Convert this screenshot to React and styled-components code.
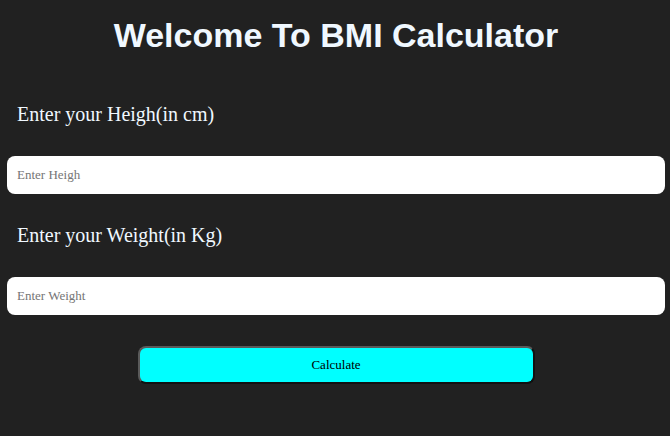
import React from 'react';
import styled, { createGlobalStyle } from 'styled-components';

const GlobalStyle = createGlobalStyle`
  html, body {
    margin: 0;
    padding: 0;
    background: #212121;
  }
`;

const Page = styled.div`
  min-height: 436px;
  padding: 0 5px 0 7px;
  box-sizing: border-box;
  background: #212121;
  font-family: "Liberation Serif", serif;
`;

const Title = styled.h1`
  margin: 0;
  padding-top: 16px;
  height: 39px;
  line-height: 39px;
  text-align: center;
  font-family: "Liberation Sans", Arial, sans-serif;
  font-size: 34px;
  font-weight: bold;
  color: #f0f8ff;
`;

const Form = styled.form`
  display: flex;
  flex-direction: column;
  padding-top: 48px;
`;

const Label = styled.label`
  display: block;
  margin: 0 0 30px 10px;
  font-size: 20px;
  line-height: 23px;
  color: #f0f8ff;
`;

const Input = styled.input`
  height: 38px;
  box-sizing: border-box;
  margin-bottom: ${(p) => p.$gap}px;
  padding: 0 10px;
  border: none;
  border-radius: 8px;
  background: #fff;
  font-family: "Liberation Serif", serif;
  font-size: 13px;
  outline: none;
  &::placeholder {
    color: #757575;
  }
`;

const Button = styled.button`
  align-self: center;
  width: 397px;
  height: 38px;
  box-sizing: border-box;
  border: 2px solid;
  border-color: #5a5a5a #111 #111 #5a5a5a;
  border-radius: 8px;
  background: #00ffff;
  color: #000;
  font-family: "Liberation Serif", serif;
  font-size: 13px;
  cursor: pointer;
`;

export default function App() {
  return (
    <Page>
      <GlobalStyle />
      <Title>Welcome To BMI Calculator</Title>
      <Form onSubmit={(e) => e.preventDefault()}>
        <Label htmlFor="height">Enter your Heigh(in cm)</Label>
        <Input id="height" type="text" placeholder="Enter Heigh" $gap={30} />
        <Label htmlFor="weight">Enter your Weight(in Kg)</Label>
        <Input id="weight" type="text" placeholder="Enter Weight" $gap={31} />
        <Button type="submit">Calculate</Button>
      </Form>
    </Page>
  );
}
